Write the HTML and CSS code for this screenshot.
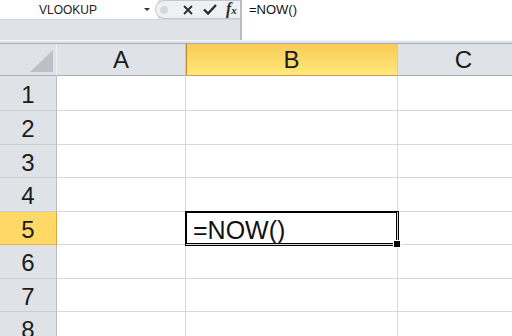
FILE: index.html
```html
<!DOCTYPE html>
<html lang="en">

<head>
  <meta charset="UTF-8">
  <meta name="viewport" content="width=device-width, initial-scale=1.0">
  <title>Excel NOW</title>
  <link rel="stylesheet" href="styles.css">
</head>

<body>
  <div class="toolbar">
    <div class="toolbar__left">
      <div class="toolbar__top">
        <div class="namebox">
          <span class="namebox__text">VLOOKUP</span>
          <span class="namebox__caret"></span>
        </div>
        <div class="pill">
          <span class="pill__dot"></span>
          <svg class="pill__icon" width="10" height="10" viewBox="0 0 10 10">
            <path d="M1 1 L9 9 M9 1 L1 9" stroke="#2b2b2b" stroke-width="1.8" fill="none" />
          </svg>
          <svg class="pill__icon" width="14" height="11" viewBox="0 0 14 11">
            <path d="M1 5.5 L5 9.5 L13 1" stroke="#2b2b2b" stroke-width="2.4" fill="none" />
          </svg>
          <i class="pill__fx">f<sub>x</sub></i>
        </div>
      </div>
    </div>
    <div class="formula">=NOW()</div>
  </div>
  <div class="rule"></div>

  <div class="sheet">
    <div class="head head--corner">
      <svg width="56" height="31" viewBox="0 0 56 31">
        <polygon points="53,6 53,28 30,28" fill="#bcc0c6" />
      </svg>
    </div>
    <div class="head">A</div>
    <div class="head head--active">B</div>
    <div class="head">C</div>

    <div class="head head--row">1</div>
    <div class="cell"></div>
    <div class="cell"></div>
    <div class="cell"></div>

    <div class="head head--row">2</div>
    <div class="cell"></div>
    <div class="cell"></div>
    <div class="cell"></div>

    <div class="head head--row">3</div>
    <div class="cell"></div>
    <div class="cell"></div>
    <div class="cell"></div>

    <div class="head head--row">4</div>
    <div class="cell"></div>
    <div class="cell"></div>
    <div class="cell"></div>

    <div class="head head--row head--row-active">5</div>
    <div class="cell"></div>
    <div class="cell cell--active">=NOW()</div>
    <div class="cell"></div>

    <div class="head head--row">6</div>
    <div class="cell"></div>
    <div class="cell"></div>
    <div class="cell"></div>

    <div class="head head--row">7</div>
    <div class="cell"></div>
    <div class="cell"></div>
    <div class="cell"></div>

    <div class="head head--row">8</div>
    <div class="cell"></div>
    <div class="cell"></div>
    <div class="cell"></div>
  </div>
</body>

</html>
```

FILE: styles.css
```css
* {
  box-sizing: border-box;
}

body {
  margin: 0;
  width: 512px;
  height: 336px;
  overflow: hidden;
  background-color: #fff;
  font-family: "Liberation Sans", Arial, sans-serif;
  color: #1e1e1e;
}

.toolbar {
  display: flex;
  height: 40px;
}

.toolbar__left {
  width: 242px;
  background-color: #dfe3e8;
  border-right: 2px solid #b8bcc3;
}

.toolbar__top {
  display: flex;
  height: 20px;
  border-bottom: 1px solid #d3d7dc;
}

.namebox {
  display: flex;
  align-items: center;
  width: 158px;
  background-color: #fff;
}

.namebox__text {
  width: 136px;
  padding-top: 1px;
  font-size: 12px;
  line-height: 16px;
  text-align: center;
  color: #222;
}

.namebox__caret {
  margin-left: 8px;
  border-left: 3px solid transparent;
  border-right: 3px solid transparent;
  border-top: 3px solid #333;
}

.pill {
  display: flex;
  align-items: center;
  flex: 1;
  margin-left: -3px;
  padding-left: 4px;
  border: 1px solid #c4c8ce;
  border-right: 0;
  border-radius: 10px 0 0 10px;
  background-color: #eef0f3;
}

.pill__dot {
  width: 8px;
  height: 8px;
  border-radius: 50%;
  background-color: #d5d8dc;
}

.pill__icon {
  margin-left: 15px;
}

.pill__icon + .pill__icon {
  margin-left: 10px;
}

.pill__fx {
  margin-left: 9px;
  font-family: "Liberation Serif", serif;
  font-size: 16px;
  font-weight: bold;
  line-height: 14px;
  color: #2b2b2b;
}

.pill__fx sub {
  font-size: 11px;
  vertical-align: 0;
}

.formula {
  flex: 1;
  padding: 2px 0 0 7px;
  font-size: 13px;
  line-height: 16px;
  color: #111;
}

.rule {
  height: 4px;
  background: linear-gradient(#f4f6f8 0 1px, #dfe3e8 1px 3px, #a9aeb5 3px 4px);
}

.sheet {
  display: grid;
  grid-template-columns: 57px 129px 212px 132px;
  grid-template-rows: 32px 35px 34px 33px 34px 33px 34px 33px 34px;
  font-size: 24px;
}

.head {
  display: flex;
  align-items: center;
  justify-content: center;
  background-color: #dfe3e8;
  border-right: 1px solid #c6cad0;
  border-bottom: 1px solid #a9aeb5;
  color: #1b1b1b;
}

.head--corner {
  display: block;
  border-right-color: #eef0f3;
}

.head--active {
  background: linear-gradient(#f8cb58, #ffe87a);
  border-bottom-color: #c99b4c;
  box-shadow: inset 1px 0 0 #c08a2a;
}

.head--row {
  padding-top: 3px;
  border-right-color: #b9bdc3;
  border-bottom-color: #c9cdd2;
}

.head--row-active {
  background-color: #ffd866;
  border-right-color: #d9a83e;
  border-bottom-color: #e5b545;
}

.cell {
  border-right: 1px solid #d8d8d8;
  border-bottom: 1px solid #d8d8d8;
}

.cell--active {
  position: relative;
  display: flex;
  align-items: center;
  padding: 4px 0 0 7px;
  font-size: 25px;
  color: #111;
  box-shadow: 0 0 0 1px #000, inset 0 0 0 1px #000;
  z-index: 1;
}

.cell--active::after {
  content: "";
  position: absolute;
  right: -4px;
  bottom: -4px;
  width: 6px;
  height: 6px;
  background-color: #000;
  border: 1px solid #fff;
}
```
